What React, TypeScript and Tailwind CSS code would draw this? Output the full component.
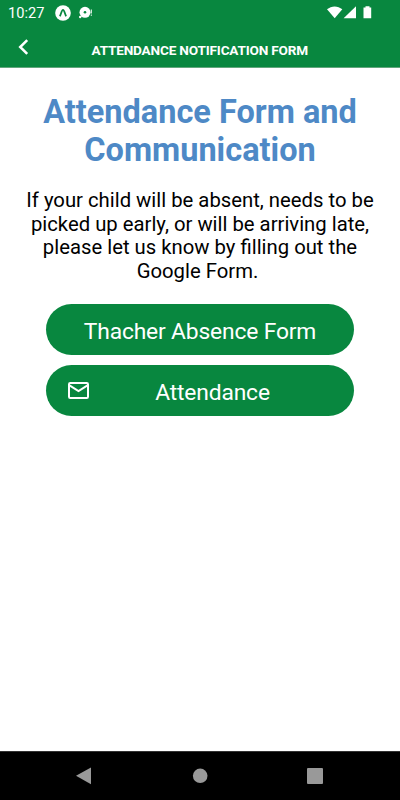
import type { ReactNode } from "react";

// --- STATUS BAR ---
function StatusBar() {
  return (
    <div className="flex h-[25px] items-center pl-2 text-white">
      <span className="w-[37px] pt-px text-[14.6px] leading-[25px] whitespace-nowrap">10:27</span>
      <svg className="ml-[10px] h-4 w-4" viewBox="0 0 16 16">
        <circle cx="8" cy="8" r="7.8" fill="#fff" />
        <path d="M4.8 11.2C6 9.6 6.6 4.9 8 4.9S10 9.6 11.2 11.2" fill="none" stroke="#08873f" strokeWidth="1.8" />
      </svg>
      <svg className="ml-[7px] h-4 w-[15px]" viewBox="0 0 15 16">
        <circle cx="7" cy="7.3" r="5.5" fill="#fff" />
        <circle cx="7" cy="7.3" r="1.3" fill="#08873f" />
        <circle cx="2.2" cy="12" r="1.2" fill="#fff" />
        <path d="M13.3 4.5v4M13.3 9.5v1.3" stroke="#fff" strokeWidth="1" />
      </svg>
      <svg className="ml-auto mr-[27px] h-[15px] w-[46px]" viewBox="0 0 46 15">
        <path d="M0 4.3C4.5.4 10.8.4 15.3 4.3L7.7 13.2z" fill="#fff" />
        <path d="M29 1.2v12H16.6z" fill="#fff" />
        <path d="M38.5 1.2h4v1.3h1.7v10.7h-7.7V2.5h2z" fill="#fff" />
      </svg>
    </div>
  );
}

function PillButton({ icon, children }: { icon?: ReactNode; children: ReactNode }) {
  return (
    <button className="relative flex h-[51px] w-[308px] items-center justify-center rounded-full bg-[#08873f] text-[22.8px] tracking-[-0.15px] text-white">
      {icon && <span className="absolute left-[22px]">{icon}</span>}
      <span className="pt-[6px] whitespace-nowrap">{children}</span>
    </button>
  );
}

function MailIcon() {
  return (
    <svg className="h-[17px] w-[21px]" viewBox="0 0 21 17" fill="none" stroke="#fff" strokeWidth="2">
      <rect x="1" y="1" width="19" height="15" rx="1.2" />
      <path d="M1.5 3.3l9 5.7 9-5.7" />
    </svg>
  );
}

export default function App() {
  return (
    <main className="flex h-[800px] w-[400px] flex-col overflow-hidden bg-white font-[Roboto,sans-serif]">
      {/* Header */}
      <header className="h-[68px] border-b border-[#62a67c] bg-[#08873f]">
        <StatusBar />
        <div className="flex h-[42px] items-center">
          <svg className="ml-[18px] mt-[2px] h-4 w-[11px]" viewBox="0 0 11 16" fill="none" stroke="#fff" strokeWidth="2.5">
            <path d="M9.2 1.1L2.2 8l7 6.9" />
          </svg>
          <h1 className="ml-[62.5px] mt-[8px] text-[13.6px] font-bold tracking-[-0.18px] whitespace-nowrap text-white">
            ATTENDANCE NOTIFICATION FORM
          </h1>
        </div>
      </header>

      {/* Content */}
      <section className="flex flex-1 flex-col items-center text-center">
        <h2 className="mt-[25px] text-[32.5px] leading-[38px] font-bold whitespace-nowrap text-[#4e89c6]">
          Attendance Form and
          <br />
          Communication
        </h2>
        <p className="mt-[20px] text-[20.3px] leading-[23.7px] whitespace-nowrap text-black">
          If your child will be absent, needs to be
          <br />
          picked up early, or will be arriving late,
          <br />
          please let us know by filling out the
          <br />
          Google Form.&nbsp;
        </p>
        <div className="mt-[20px] flex flex-col gap-[10px]">
          <PillButton>Thacher Absence Form</PillButton>
          <PillButton icon={<MailIcon />}>
            <span className="ml-[25px]">Attendance</span>
          </PillButton>
        </div>
      </section>

      {/* Android navigation */}
      <nav className="h-[49px] border-t border-[#333] bg-black">
        <svg className="h-12 w-full" viewBox="0 0 400 48" fill="#999">
          <path d="M76 23.8L91 15.5v16.8z" />
          <circle cx="200.2" cy="23.8" r="7.3" />
          <rect x="307" y="16" width="16" height="16" rx="1" />
        </svg>
      </nav>
    </main>
  );
}
